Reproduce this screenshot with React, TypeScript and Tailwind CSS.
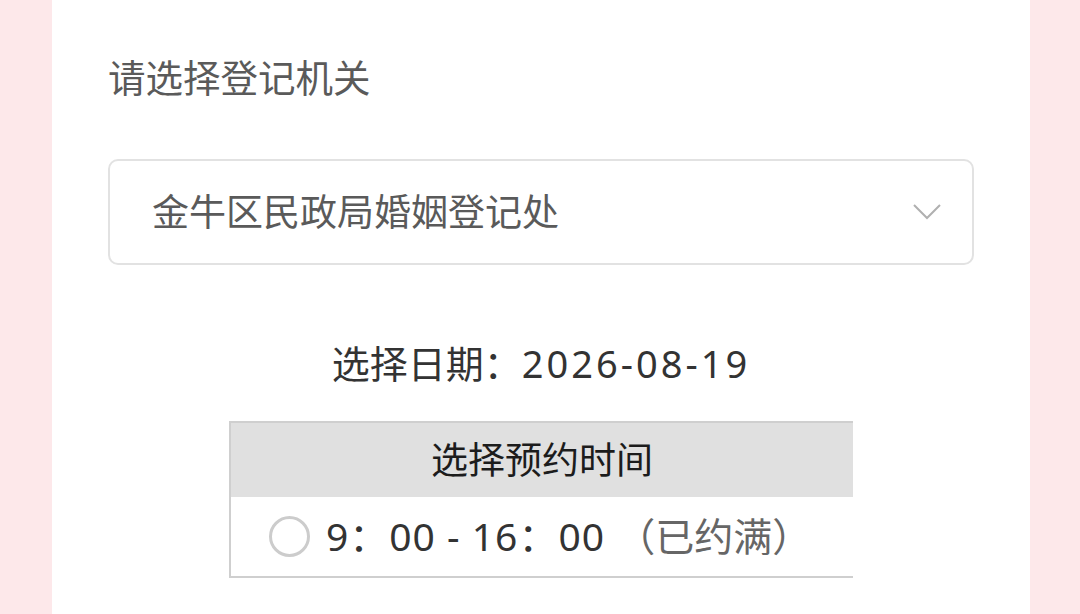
import React from "react";

export default function App() {
  return (
    <div
      className="w-[1080px] h-[614px] bg-[#fde8ea] flex overflow-hidden"
      style={{ fontFamily: '"Noto Sans", "Noto Sans CJK SC", sans-serif' }}
    >
      <div className="ml-[52px] w-[978px] h-full bg-white px-[56px] flex flex-col">
        <div className="mt-[52px] h-[52px] leading-[52px] text-[37.5px] text-[#5a5a5a]">
          请选择登记机关
        </div>
        <div className="mt-[55px] h-[106px] border-2 border-[#e2e2e2] rounded-[10px] flex items-center pl-[42px] pr-[30px]">
          <span className="flex-1 text-[37px] text-[#5a5a5a]">金牛区民政局婚姻登记处</span>
          <svg width="30" height="18" viewBox="0 0 30 18" fill="none">
            <path d="M2 2 L15 15 L28 2" stroke="#b0b0b0" strokeWidth="2" />
          </svg>
        </div>
        <div className="mt-[70px] h-[56px] leading-[56px] text-center text-[38px] text-[#333333]">
          选择日期：<span className="tracking-[3px]">2026-08-19</span>
        </div>
        <div className="mt-[30px] self-center w-[624px] flex flex-col">
          <div className="h-[76px] bg-[#e0e0e0] border-t-2 border-l-2 border-[#cfcfcf] flex items-center justify-center text-[37px] text-[#1c1c1c]">
            选择预约时间
          </div>
          <div className="h-[81px] border-l-2 border-b-2 border-[#cfcfcf] flex items-center pl-[38px]">
            <span className="w-[41px] h-[41px] rounded-full border-[3px] border-[#cccccc] shrink-0" />
            <span className="ml-[16px] text-[39px] text-[#333333] whitespace-pre tracking-[1px]">9：00 - 16：00 </span>
            <span className="text-[39px] text-[#666666]">（已约满）</span>
          </div>
        </div>
      </div>
    </div>
  );
}
